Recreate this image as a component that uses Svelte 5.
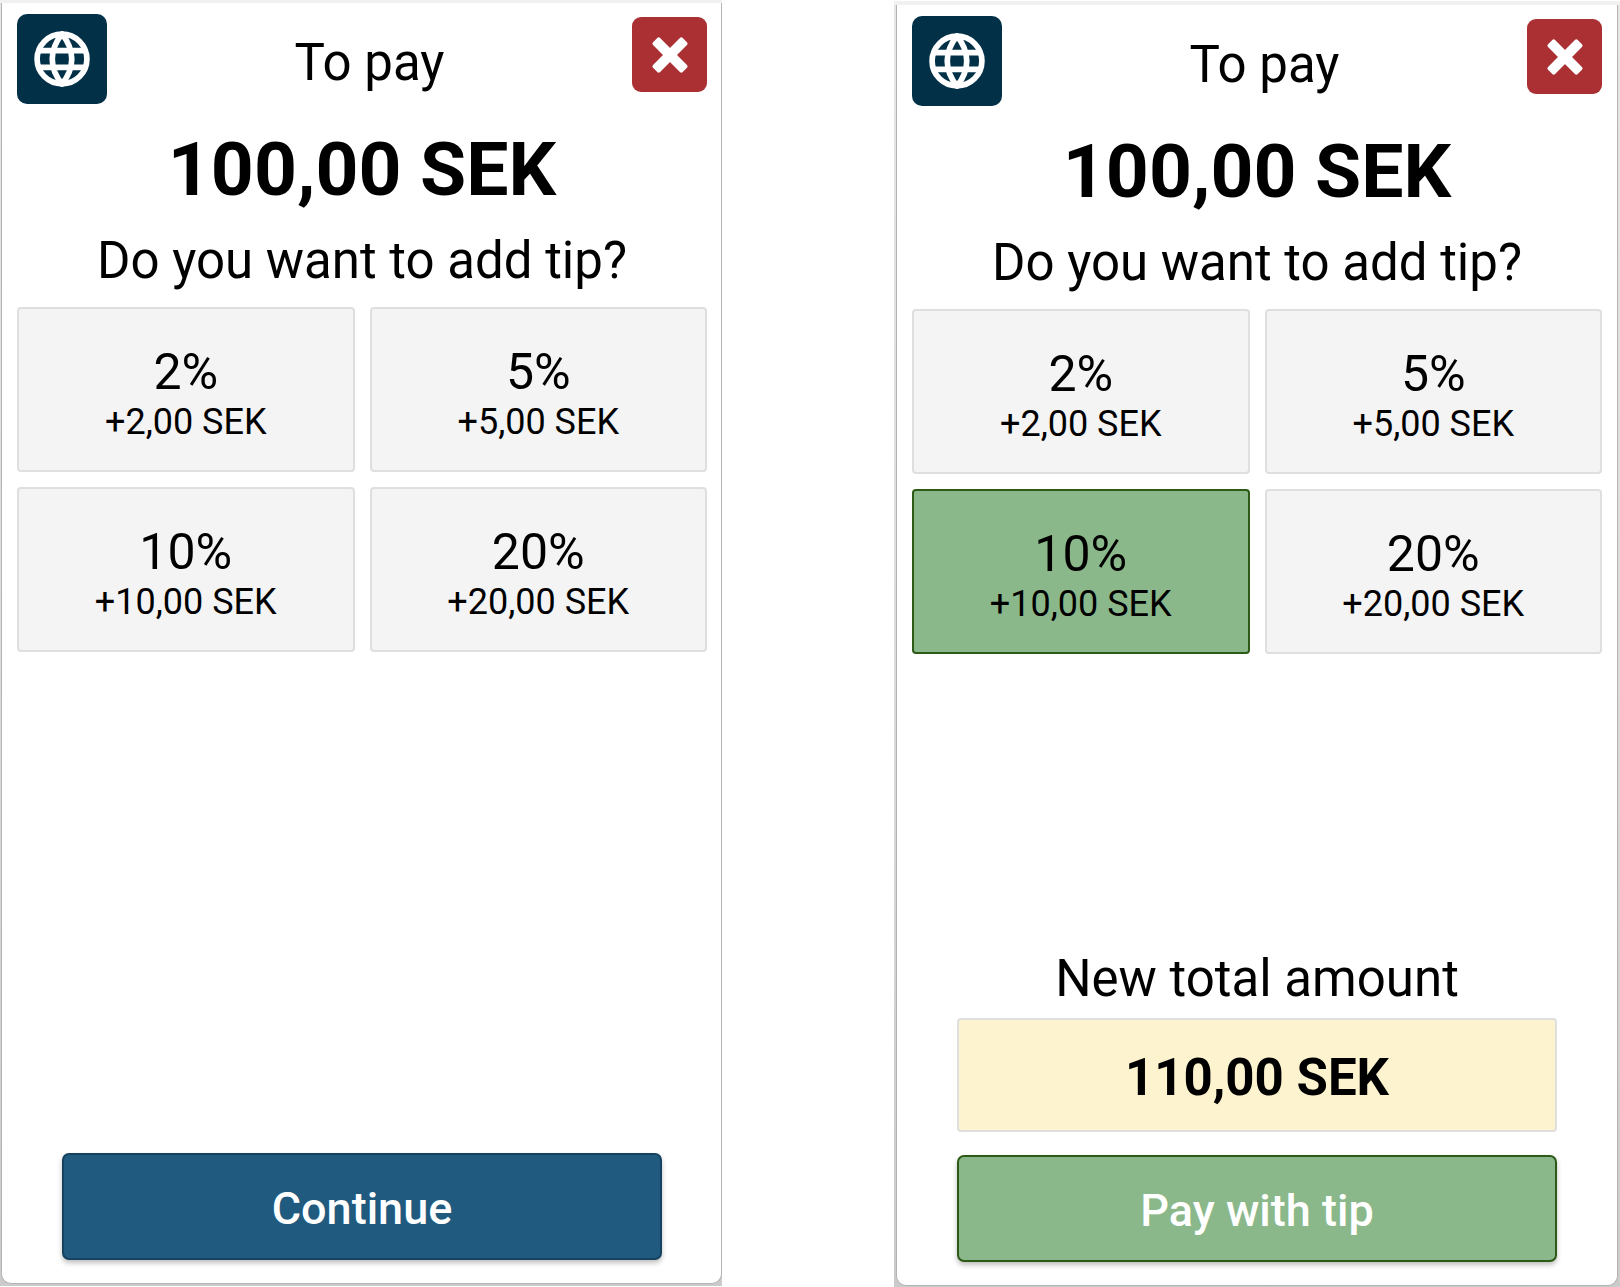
<script>
  const tips = [2, 5, 10, 20];
  const base = 100;
  const money = (n) => n.toFixed(2).replace('.', ',') + ' SEK';

  let screens = $state([
    { id: 'plain', selected: null },
    { id: 'tipped', selected: 10 }
  ]);

  function toggle(screen, tip) {
    screen.selected = screen.selected === tip ? null : tip;
  }
</script>

<main>
  {#each screens as screen (screen.id)}
    <div class="frame {screen.id}">
      <section class="card" aria-label="Payment">
        <header>
          <button class="language" aria-label="Change language">
            <svg viewBox="0 0 56 56" fill="none" stroke="#fff" stroke-width="5.7">
              <circle cx="28" cy="28" r="24.9" />
              <path d="M28 3C15 19 15 37 28 53C41 37 41 19 28 3Z" stroke-linejoin="round" />
              <path d="M4 19.7H52M4 36.3H52" />
            </svg>
          </button>
          <h1>To pay</h1>
          <button class="close" aria-label="Close">
            <svg viewBox="0 0 38 38" fill="#fff">
              <rect x="-2" y="14" width="42" height="10" rx="2" transform="rotate(45 19 19)" />
              <rect x="-2" y="14" width="42" height="10" rx="2" transform="rotate(-45 19 19)" />
            </svg>
          </button>
        </header>

        <p class="amount">{money(base)}</p>
        <h2>Do you want to add tip?</h2>

        <div class="tips">
          {#each tips as tip}
            <button
              class="tip"
              class:selected={screen.selected === tip}
              aria-pressed={screen.selected === tip}
              onclick={() => toggle(screen, tip)}
            >
              <span class="percent">{tip}%</span>
              <span class="extra">+{money((base * tip) / 100)}</span>
            </button>
          {/each}
        </div>

        <footer>
          {#if screen.selected !== null}
            <p class="label">New total amount</p>
            <p class="total">{money(base + (base * screen.selected) / 100)}</p>
            <button class="action pay">Pay with tip</button>
          {:else}
            <button class="action">Continue</button>
          {/if}
        </footer>
      </section>
    </div>
  {/each}
</main>

<style>
  :global(body) {
    margin: 0;
    background: #fff;
  }

  main {
    box-sizing: border-box;
    min-height: 100vh;
    display: grid;
    grid-template-columns: 722fr 726fr;
    column-gap: 172px;
    font-family: Roboto, 'Liberation Sans', sans-serif;
    color: #000;
  }

  .frame {
    box-sizing: border-box;
    display: flex;
    border-top: 3px solid #f1f1f1;
    background: linear-gradient(#e6e6e6, #dcdcdc 50%, #cbcbcb);
  }

  .plain {
    padding: 0 0 2px 1px;
    margin-bottom: 1px;
  }

  .tipped {
    padding: 0 2px 1px;
    margin-top: 1px;
    border-top-width: 4px;
  }

  .card {
    flex: 1;
    box-sizing: border-box;
    display: flex;
    flex-direction: column;
    padding: 11px 14px 23px 15px;
    background: #fff;
    border: 1px solid #b4b4b4;
    border-top: 0;
    border-radius: 0 0 10px 10px;
  }

  .tipped .card {
    padding-right: 15px;
  }

  h1,
  h2,
  p {
    margin: 0;
    text-align: center;
    font-weight: 400;
  }

  button {
    margin: 0;
    padding: 0;
    border: 0;
    font: inherit;
    color: inherit;
    cursor: pointer;
  }

  header {
    display: flex;
    align-items: flex-start;
  }

  .language,
  .close {
    display: flex;
    align-items: center;
    justify-content: center;
  }

  .language {
    width: 90px;
    height: 90px;
    border-radius: 10px;
    background: #023047;
  }

  .language svg {
    width: 56px;
    height: 56px;
  }

  .close {
    width: 75px;
    height: 75px;
    margin-top: 3px;
    border-radius: 9px;
    background: #aa3033;
  }

  .close svg {
    width: 38px;
    height: 38px;
  }

  h1,
  h2,
  .label {
    font-size: 51px;
    line-height: 60px;
  }

  h1 {
    flex: 1;
    padding-top: 19px;
  }

  .amount {
    margin-top: 20px;
    font-size: 75px;
    line-height: 90px;
    font-weight: 700;
  }

  h2 {
    margin: 17px 0 16px;
  }

  .tips {
    display: grid;
    grid-template-columns: 1fr 1fr;
    gap: 15px;
  }

  .tip {
    box-sizing: border-box;
    height: 165px;
    border: 2px solid #dfdfdf;
    border-radius: 4px;
    background: #f4f4f4;
  }

  .tip.selected {
    background: #8ab88a;
    border-color: #2d5a16;
  }

  .percent,
  .extra {
    display: block;
  }

  .percent {
    font-size: 50px;
    line-height: 65px;
  }

  .extra {
    font-size: 36px;
    line-height: 34px;
  }

  footer {
    margin-top: auto;
    padding: 0 45px;
  }

  .total {
    box-sizing: border-box;
    height: 114px;
    margin: 9px 0 23px;
    padding-top: 3px;
    border: 2px solid #dfdfdf;
    border-radius: 4px;
    background: #fdf3ce;
    font-size: 51px;
    line-height: 110px;
    font-weight: 700;
  }

  .action {
    box-sizing: border-box;
    width: 100%;
    height: 107px;
    padding-top: 4px;
    border: 2px solid #14425f;
    border-radius: 7px;
    background: #205b7f;
    box-shadow: 0 3px 5px rgba(0, 0, 0, 0.25);
    color: #fff;
    font-size: 45px;
    font-weight: 500;
  }

  .action.pay {
    background: #8ab88a;
    border-color: #2d5a16;
  }
</style>
